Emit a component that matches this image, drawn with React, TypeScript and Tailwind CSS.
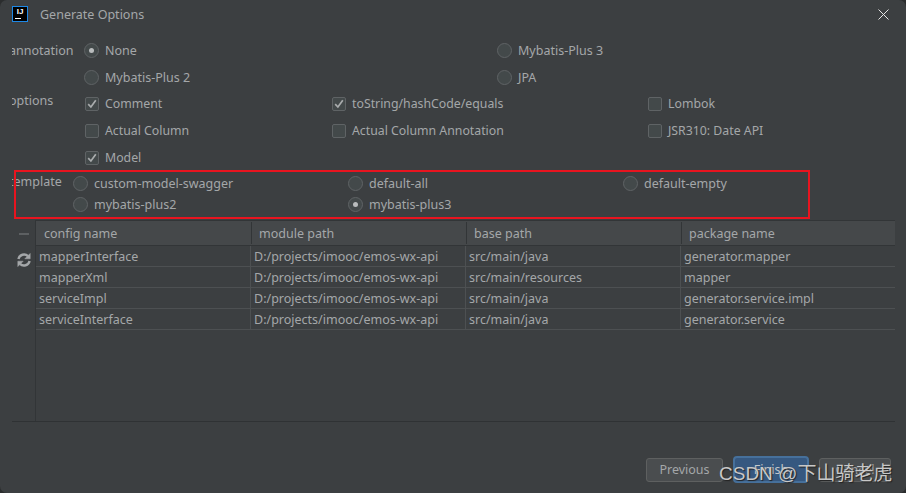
import React from "react";

const Radio = ({ on }: { on?: boolean }) => (
  <span className="flex h-[15px] w-[15px] shrink-0 items-center justify-center rounded-full border border-[#5f6365] bg-[#43494a]">
    {on && <span className="h-[5px] w-[5px] rounded-full bg-[#b9bcbd]" />}
  </span>
);

const Check = ({ on }: { on?: boolean }) => (
  <span className="flex h-[14px] w-[14px] shrink-0 items-center justify-center rounded-[2px] border border-[#5f6365] bg-[#43494a]">
    {on && (
      <svg width="10" height="10" viewBox="0 0 10 10" fill="none">
        <path d="M1.2 5.2 L3.9 8 L8.8 1.2" stroke="#a9acad" strokeWidth="1.7" />
      </svg>
    )}
  </span>
);

const RadioItem = ({ label, on }: { label: string; on?: boolean }) => (
  <div className="flex items-center gap-[6px]">
    <Radio on={on} />
    <span className="pt-[2px]">{label}</span>
  </div>
);

const CheckItem = ({ label, on }: { label: string; on?: boolean }) => (
  <div className="flex items-center gap-[6px] pl-px">
    <Check on={on} />
    <span className="pt-[2px] text-[12.3px]">{label}</span>
  </div>
);

const rows = [
  ["mapperInterface", "D:/projects/imooc/emos-wx-api", "src/main/java", "generator.mapper"],
  ["mapperXml", "D:/projects/imooc/emos-wx-api", "src/main/resources", "mapper"],
  ["serviceImpl", "D:/projects/imooc/emos-wx-api", "src/main/java", "generator.service.impl"],
  ["serviceInterface", "D:/projects/imooc/emos-wx-api", "src/main/java", "generator.service"],
];
const headers = ["config name", "module path", "base path", "package name"];

export default function App() {
  return (
    <div className="h-[493px] w-[906px] bg-[#2b2d2e]">
      <div
        className="relative flex h-[493px] w-[906px] flex-col overflow-hidden rounded-[7px] bg-[#3c3f41] text-[12.5px] text-[#a4a7a9]"
        style={{ fontFamily: '"Noto Sans", "Noto Sans CJK SC", sans-serif' }}
      >
        <div className="flex h-[28px] items-center pl-[13px] pr-[17px]">
          <span className="relative flex h-[14px] w-[14px] items-start justify-center bg-black ring-1 ring-[#1e88e5]">
            <span className="text-[8px] font-bold leading-[10px] text-white" style={{ fontFamily: '"Liberation Sans", sans-serif' }}>IJ</span>
            <span className="absolute bottom-[2px] left-[2px] h-px w-[6px] bg-white" />
          </span>
          <span className="ml-[13px] pt-[2px] leading-none">Generate Options</span>
          <svg className="ml-auto" width="11" height="11" viewBox="0 0 11 11">
            <path d="M0.5 0.5 L10.5 10.5 M10.5 0.5 L0.5 10.5" stroke="#e4e4e4" strokeWidth="1" />
          </svg>
        </div>

        <div className="pl-[12px] pt-[9px]">
          <div className="grid h-[27px] grid-cols-[72px_413px_1fr] items-center">
            <span className="overflow-hidden pt-[2px]"><span className="-ml-[3px] block">annotation</span></span>
            <RadioItem label="None" on />
            <RadioItem label="Mybatis-Plus 3" />
          </div>
          <div className="grid h-[26px] grid-cols-[72px_413px_1fr] items-center">
            <span />
            <RadioItem label="Mybatis-Plus 2" />
            <RadioItem label="JPA" />
          </div>
          <div className="grid h-[27px] grid-cols-[72px_247px_316px_1fr] items-center">
            <span className="-mt-[5px] overflow-hidden"><span className="-ml-[3px] block">options</span></span>
            <CheckItem label="Comment" on />
            <CheckItem label="toString/hashCode/equals" on />
            <CheckItem label="Lombok" />
          </div>
          <div className="grid h-[27px] grid-cols-[72px_247px_316px_1fr] items-center">
            <span />
            <CheckItem label="Actual Column" />
            <CheckItem label="Actual Column Annotation" />
            <CheckItem label="JSR310: Date API" />
          </div>
          <div className="grid h-[27px] grid-cols-[72px_247px_316px_1fr] items-center">
            <span />
            <CheckItem label="Model" on />
          </div>
          <div className="mt-[2px] grid h-[21px] grid-cols-[61px_275px_275px_1fr] items-center">
            <span className="-mt-[3px] overflow-hidden"><span className="-ml-[3px] block">template</span></span>
            <RadioItem label="custom-model-swagger" />
            <RadioItem label="default-all" />
            <RadioItem label="default-empty" />
          </div>
          <div className="grid h-[21px] grid-cols-[61px_275px_275px_1fr] items-center">
            <span />
            <RadioItem label="mybatis-plus2" />
            <RadioItem label="mybatis-plus3" on />
          </div>
        </div>

        <div className="ml-[12px] mr-[11px] mt-[5px] flex h-[202px] border-b border-[#2f3234]">
          <div className="flex w-[24px] flex-col items-center border-r border-[#323537] pt-[13px]">
            <span className="h-[2px] w-[10px] bg-[#5d6062]" />
            <svg className="mt-[18px]" width="14" height="14" viewBox="0 0 14 14" fill="none" stroke="#a4a7a9" strokeWidth="2.4">
              <path d="M1.4 6 A5.7 5.7 0 0 1 11 3.2" />
              <path d="M12.6 8 A5.7 5.7 0 0 1 3 10.8" />
              <path d="M13.2 0.4 V5.8 H7.8 Z" strokeWidth="0.5" fill="#a4a7a9" />
              <path d="M0.8 13.6 V8.2 H6.2 Z" strokeWidth="0.5" fill="#a4a7a9" />
            </svg>
          </div>
          <div className="flex-1">
            <div className="grid h-[26px] grid-cols-[216px_215px_215px_213px] items-center border-y border-[#323537] bg-[#45484a]">
              {headers.map((h, i) => (
                <div key={h} className={`flex h-[22px] items-center border-r border-[#323537] pt-[2px] last:border-r-0 ${i === 0 ? "pl-[8px]" : "pl-[7px]"}`}>
                  {h}
                </div>
              ))}
            </div>
            {rows.map((r) => (
              <div key={r[0]} className="grid h-[21px] grid-cols-[215px_215px_215px_214px] border-b border-[#4d5052]">
                {r.map((c, i) => (
                  <div key={i} className="flex items-center border-r border-[#4d5052] pl-[3px] pt-[2px] last:border-r-0">
                    {c}
                  </div>
                ))}
              </div>
            ))}
          </div>
        </div>

        <div className="mt-[34px] flex items-center justify-end gap-[10px] pr-[15px]">
          <div className="flex h-[24px] w-[77px] items-center justify-center rounded-[3px] border border-[#5e6060] bg-[#4a4d4f] pt-[2px]">Previous</div>
          <div className="flex h-[27px] w-[76px] items-center justify-center rounded-[4px] border-2 border-[#46709b] bg-[#365880] pt-[2px] text-[#c4c8cb]">Finish</div>
          <div className="flex h-[24px] w-[72px] items-center justify-center rounded-[3px] border border-[#5e6060] bg-[#4a4d4f] pt-[2px]">Cancel</div>
        </div>

        <div className="pointer-events-none absolute left-[14px] top-[170px] h-[49px] w-[796px] border-[2px] border-[#e8141f]" />
        <div
          className="pointer-events-none absolute left-[719px] top-[461px] text-[19px] leading-[26px] text-[#c8c8c8] [text-shadow:1px_1px_1px_#222]"
          style={{ fontFamily: '"Liberation Sans", "Noto Sans CJK SC", sans-serif' }}
        >
          CSDN @下山骑老虎
        </div>
      </div>
    </div>
  );
}
